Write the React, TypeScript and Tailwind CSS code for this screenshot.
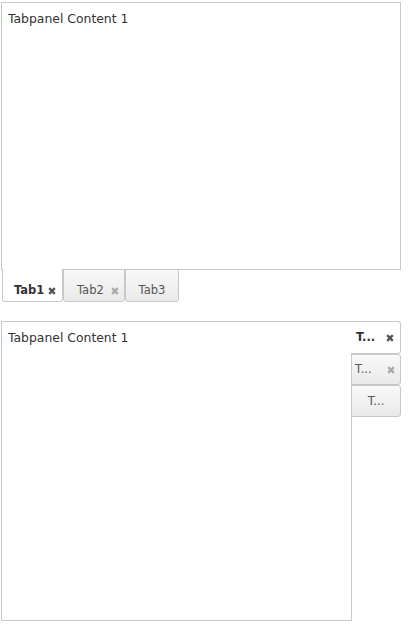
import React from "react";

const font = { fontFamily: '"DejaVu Sans", Verdana, sans-serif' };

function CloseX({ color }: { color: string }) {
  return (
    <svg width="8" height="8" viewBox="0 0 8 8" className="shrink-0">
      <path d="M1.2 1.2 L6.8 6.8 M6.8 1.2 L1.2 6.8" stroke={color} strokeWidth="2.4" strokeLinecap="butt" />
    </svg>
  );
}

export default function App() {
  return (
    <div className="bg-white w-[418px] h-[634px] text-[#333] text-[12.4px]" style={font}>
      {/* Top tabpanel with bottom tabs */}
      <div className="pt-[2px] pl-px">
        <div className="w-[400px] h-[268px] border border-[#c8c8c8] bg-white pl-[6px] pt-[9px] leading-[14px]">
          Tabpanel Content 1
        </div>
        <div className="flex -mt-px pl-px text-[11.5px] leading-[13px]">
          <div className="relative z-10 w-[61px] h-[33px] flex items-center justify-between pt-[11px] pl-[11px] pr-[6px] bg-white border border-t-0 border-[#c8c8c8] rounded-b-[3px] font-bold text-[#333]">
            <span>Tab1</span>
            <CloseX color="#555" />
          </div>
          <div className="w-[62px] h-[33px] flex items-center justify-between pt-[10px] pl-[13px] pr-[5px] bg-gradient-to-b from-[#f9f9f9] to-[#e9e9e9] border border-[#c8c8c8] rounded-b-[3px] text-[#555]">
            <span>Tab2</span>
            <CloseX color="#aaa" />
          </div>
          <div className="w-[54px] h-[33px] flex items-center justify-center pt-[10px] bg-gradient-to-b from-[#f9f9f9] to-[#e9e9e9] border border-[#c8c8c8] rounded-b-[3px] text-[#555]">
            <span>Tab3</span>
          </div>
        </div>
      </div>

      {/* Bottom tabpanel with right tabs */}
      <div className="flex items-start pt-[19px] pl-px">
        <div className="w-[351px] h-[300px] border border-[#c8c8c8] bg-white pl-[6px] pt-[9px] leading-[14px]">
          Tabpanel Content 1
        </div>
        <div className="flex flex-col -ml-px w-[50px] text-[11.5px] leading-[13px]">
          <div className="relative z-10 h-[33px] flex items-center justify-between pl-[5px] pr-[6px] bg-white border border-l-0 border-[#c8c8c8] rounded-r-[3px] font-bold text-[#333]">
            <span>T...</span>
            <CloseX color="#555" />
          </div>
          <div className="h-[31px] flex items-center justify-between pl-[3px] pr-[5px] bg-gradient-to-b from-[#f9f9f9] to-[#e9e9e9] border border-[#c8c8c8] rounded-r-[3px] text-[#555]">
            <span>T...</span>
            <CloseX color="#aaa" />
          </div>
          <div className="h-[32px] flex items-center justify-center bg-gradient-to-b from-[#f9f9f9] to-[#e9e9e9] border border-[#c8c8c8] rounded-r-[3px] text-[#555]">
            <span>T...</span>
          </div>
        </div>
      </div>
    </div>
  );
}
